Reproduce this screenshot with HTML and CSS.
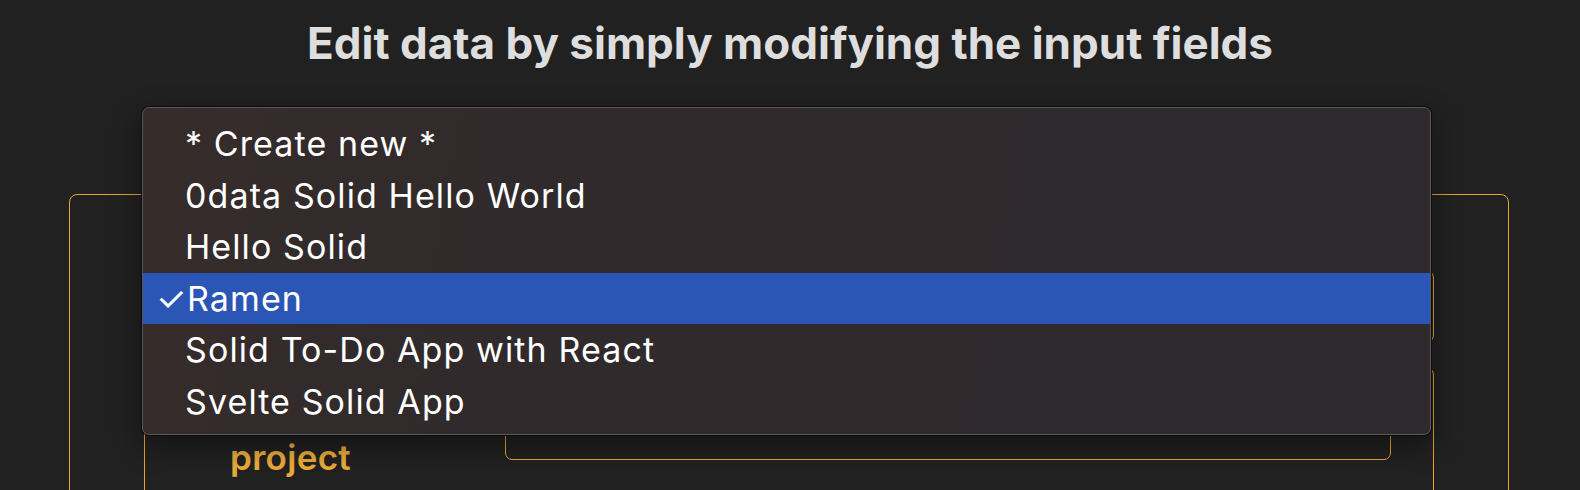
FILE: index.html
```html
<!DOCTYPE html>
<html lang="en">
<head>
<meta charset="utf-8">
<title>Edit data</title>
<link rel="stylesheet" href="styles.css">
</head>
<body>
<h1 class="title">Edit data by simply modifying the input fields</h1>
<div class="panel">
  <div class="picker">
    <div class="select-box"></div>
    <ul class="menu">
      <li class="item">* Create new *</li>
      <li class="item">0data Solid Hello World</li>
      <li class="item">Hello Solid</li>
      <li class="item selected"><span class="check">✓</span>Ramen</li>
      <li class="item">Solid To-Do App with React</li>
      <li class="item">Svelte Solid App</li>
    </ul>
  </div>
  <div class="group">
    <div class="row">
      <span class="spacer"></span>
      <div class="input"></div>
    </div>
    <div class="label">project</div>
  </div>
</div>
</body>
</html>
```

FILE: styles.css
```css
html, body {
  margin: 0;
  padding: 0;
}
body {
  background: #212121;
  font-family: Inter, "Noto Sans", sans-serif;
  color: #ffffff;
  height: 490px;
  overflow: hidden;
}
.title {
  margin: 0;
  padding-top: 16px;
  text-align: center;
  font-size: 44px;
  font-weight: 700;
  line-height: 54px;
  color: #dedede;
}
.panel {
  box-sizing: border-box;
  margin: 124px 0 0 69px;
  width: 1440px;
  height: 400px;
  border: 1px solid #e8a52a;
  border-radius: 8px;
  padding: 75px 74px 0 74px;
}
.picker {
  position: relative;
}
.select-box {
  box-sizing: border-box;
  height: 73px;
  border: 1px solid #e8a52a;
  border-radius: 8px;
}
.menu {
  position: absolute;
  left: -2px;
  top: -163px;
  width: 1289px;
  height: 328px;
  box-sizing: border-box;
  margin: 0;
  padding: 10px 0 8px 0;
  list-style: none;
  border: 1px solid #5b595b;
  border-radius: 7px;
  background: linear-gradient(100deg, #362c2a 0%, #302a2c 30%, #2f2a2e 100%);
  box-shadow: 0 0 0 1px #0b0b0b, 0 10px 30px rgba(0, 0, 0, 0.45);
}
.item {
  height: 51.5px;
  line-height: 51.5px;
  padding-left: 42px;
  font-size: 34px;
  letter-spacing: 1.1px;
  color: #ffffff;
  white-space: nowrap;
}
.item.selected {
  background: #2b56b5;
}
.check {
  display: inline-block;
  width: 31px;
  margin-left: -29px;
  letter-spacing: 0;
}
.group {
  box-sizing: border-box;
  margin-top: 24px;
  height: 200px;
  border: 1px solid #e8a52a;
  border-radius: 8px;
  padding: 19px 42px 0 85px;
}
.row {
  display: flex;
  align-items: center;
  justify-content: space-between;
}
.spacer {
  width: 200px;
}
.input {
  box-sizing: border-box;
  width: 886px;
  height: 73px;
  border: 1px solid #e8a52a;
  border-radius: 7px;
}
.label {
  margin-top: -24px;
  font-size: 35px;
  font-weight: 600;
  letter-spacing: 0.3px;
  color: #eaac3a;
}
```
